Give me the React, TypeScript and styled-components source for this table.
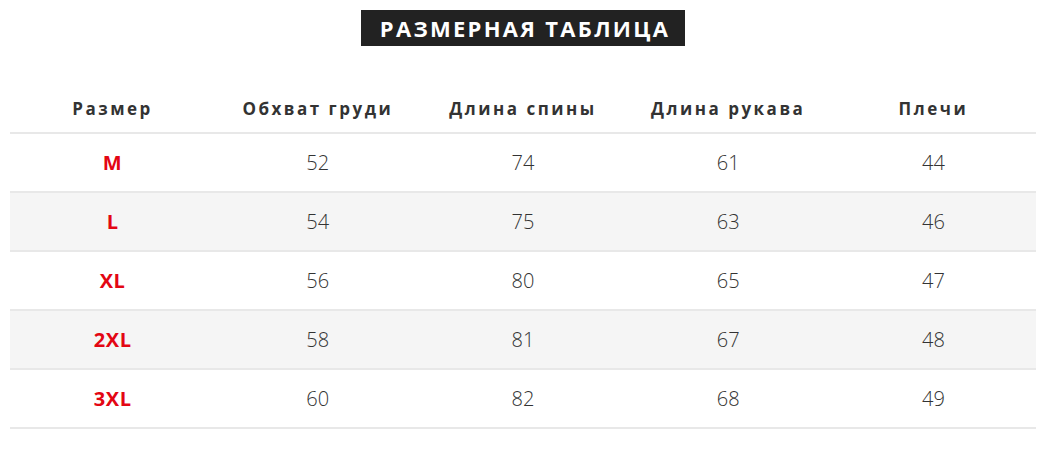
import React from 'react';
import styled, { createGlobalStyle } from 'styled-components';

const GlobalStyle = createGlobalStyle`
  body {
    margin: 0;
    background: #fff;
    font-family: "Open Sans", "Liberation Sans", sans-serif;
  }
`;

const Page = styled.div`
  width: 1026px;
  margin-left: 10px;
  padding-top: 10px;
`;

const TitleWrap = styled.div`
  display: flex;
  justify-content: center;
`;

const Title = styled.h1`
  margin: 0;
  height: 36px;
  padding: 0 15px 0 19px;
  display: flex;
  align-items: center;
  background: #222;
  color: #fff;
  font-size: 22px;
  font-weight: 700;
  letter-spacing: 2.3px;
`;

const Table = styled.div`
  margin-top: 40px;
`;

const Row = styled.div<{ $shaded?: boolean; $head?: boolean }>`
  display: grid;
  grid-template-columns: repeat(5, 1fr);
  align-items: center;
  height: ${p => (p.$head ? '46px' : '57px')};
  background: ${p => (p.$shaded ? '#f5f5f5' : '#fff')};
  border-bottom: 2px solid #e8e8e8;
`;

const HeadCell = styled.div`
  text-align: center;
  font-size: 17px;
  font-weight: 700;
  letter-spacing: 2.5px;
  color: #333;
  padding-bottom: 2px;
`;

const SizeCell = styled.div`
  text-align: center;
  font-size: 20px;
  font-weight: 700;
  letter-spacing: 0.6px;
  color: #e30613;
`;

const Cell = styled.div`
  text-align: center;
  font-size: 20px;
  font-weight: 300;
  color: #333;
`;

const headers = ['Размер', 'Обхват груди', 'Длина спины', 'Длина рукава', 'Плечи'];

const rows: [string, number, number, number, number][] = [
  ['M', 52, 74, 61, 44],
  ['L', 54, 75, 63, 46],
  ['XL', 56, 80, 65, 47],
  ['2XL', 58, 81, 67, 48],
  ['3XL', 60, 82, 68, 49],
];

const App: React.FC = () => (
  <>
    <GlobalStyle />
    <Page>
      <TitleWrap>
        <Title>РАЗМЕРНАЯ ТАБЛИЦА</Title>
      </TitleWrap>
      <Table>
        <Row $head>
          {headers.map(h => (
            <HeadCell key={h}>{h}</HeadCell>
          ))}
        </Row>
        {rows.map(([size, ...vals], i) => (
          <Row key={size} $shaded={i % 2 === 1}>
            <SizeCell>{size}</SizeCell>
            {vals.map((v, j) => (
              <Cell key={j}>{v}</Cell>
            ))}
          </Row>
        ))}
      </Table>
    </Page>
  </>
);

export default App;
